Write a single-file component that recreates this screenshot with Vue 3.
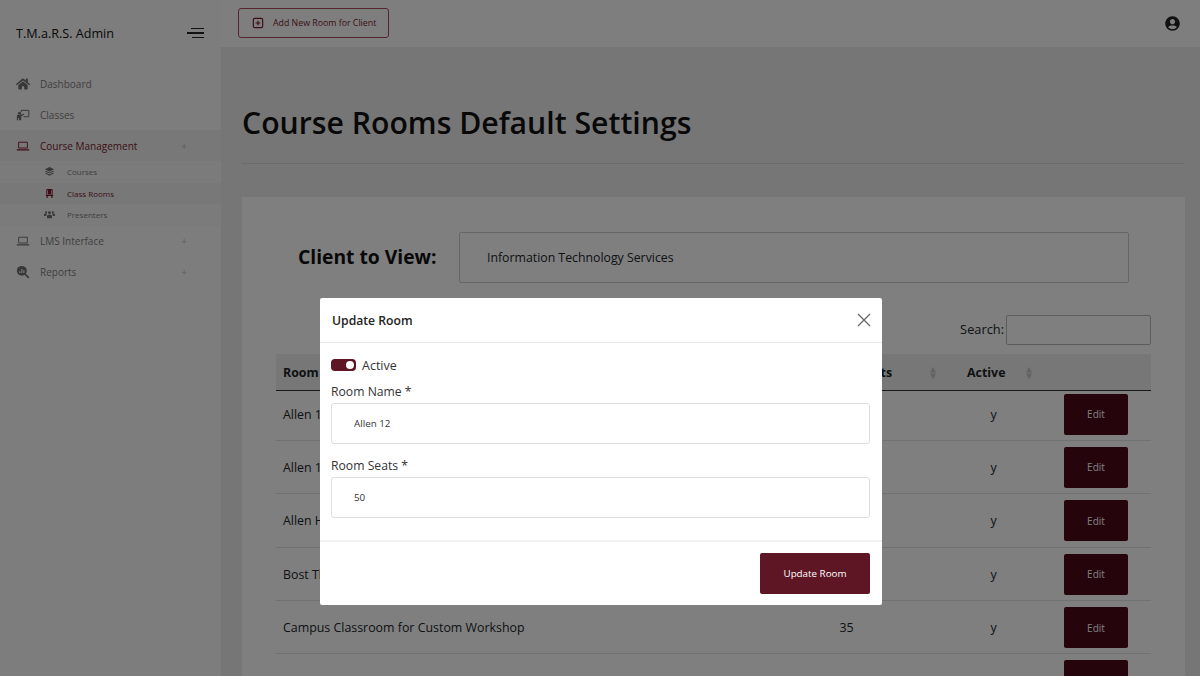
<template>
  <div class="app">
    <aside class="sidebar">
      <div class="brand">
        <span>T.M.a.R.S. Admin</span>
        <button class="burger" aria-label="Menu"><i></i><i></i><i></i></button>
      </div>
      <nav class="nav">
        <template v-for="item in nav" :key="item.label">
          <a class="nav-item" :class="{ open: item.children }">
            <svg class="nav-icon" :viewBox="icons[item.icon].box" v-html="icons[item.icon].body"></svg>
            <span class="nav-label">{{ item.label }}</span>
            <span v-if="item.plus" class="plus">+</span>
          </a>
          <div v-if="item.children" class="sub">
            <a v-for="c in item.children" :key="c.label" class="sub-item" :class="{ current: c.current }">
              <svg class="sub-icon" :viewBox="icons[c.icon].box" v-html="icons[c.icon].body"></svg>
              <span>{{ c.label }}</span>
            </a>
          </div>
        </template>
      </nav>
    </aside>

    <div class="page">
      <header class="topbar">
        <button class="add-btn">
          <svg viewBox="0 0 24 24" class="add-icon"><rect x="4" y="4" width="16" height="16" rx="2.5" fill="none" stroke="currentColor" stroke-width="2"/><path d="M12 8v8M8 12h8" stroke="currentColor" stroke-width="2"/></svg>
          Add New Room for Client
        </button>
        <svg class="user" viewBox="0 0 496 512"><path d="M248 8C111 8 0 119 0 256s111 248 248 248 248-111 248-248S385 8 248 8zm0 96c48.6 0 88 39.4 88 88s-39.4 88-88 88-88-39.4-88-88 39.4-88 88-88zm0 344c-58.7 0-111.3-26.6-146.5-68.2 18.8-35.4 55.6-59.8 98.5-59.8 2.4 0 4.8.4 7.1 1.1 13 4.2 26.6 6.9 40.9 6.9 14.3 0 28-2.7 40.9-6.9 2.3-.7 4.7-1.1 7.1-1.1 42.9 0 79.7 24.4 98.5 59.8C359.3 421.4 306.7 448 248 448z"/></svg>
      </header>

      <main class="main">
        <h1>Course Rooms Default Settings</h1>
        <hr />
        <section class="card">
          <div class="client">
            <label>Client to View:</label>
            <div class="client-box">Information Technology Services</div>
          </div>
          <div class="search">
            <label>Search:</label>
            <input type="text" />
          </div>
          <table class="table">
            <colgroup><col class="c1" /><col class="c2" /><col class="c3" /><col class="c4" /></colgroup>
            <thead>
              <tr>
                <th>Room Name</th>
                <th>Room Seats<svg class="sort s1" viewBox="0 0 8 16"><path d="M4 1l3.500 6.500h-7zM4 15L.5 8.500h7z"/></svg></th>
                <th>Active<svg class="sort s2" viewBox="0 0 8 16"><path d="M4 1l3.500 6.500h-7zM4 15L.5 8.500h7z"/></svg></th>
                <th></th>
              </tr>
            </thead>
            <tbody>
              <tr v-for="r in rooms" :key="r.name">
                <td>{{ r.name }}</td>
                <td class="seats">{{ r.seats }}</td>
                <td class="active">{{ r.active }}</td>
                <td><button class="edit">Edit</button></td>
              </tr>
            </tbody>
          </table>
        </section>
      </main>
    </div>

    <div class="backdrop">
      <div class="modal">
        <div class="modal-head">
          <h2>Update Room</h2>
          <button class="close" aria-label="Close">
            <svg viewBox="0 0 14 14"><path d="M1 1l12 12M13 1L1 13" stroke="currentColor" stroke-width="1.300" fill="none"/></svg>
          </button>
        </div>
        <form class="modal-body" @submit.prevent>
          <label class="switch-row">
            <input v-model="form.active" type="checkbox" class="switch" />
            Active
          </label>
          <label class="field-label">Room Name *</label>
          <input v-model="form.name" class="field" />
          <label class="field-label second">Room Seats *</label>
          <input v-model="form.seats" class="field" />
        </form>
        <div class="modal-foot">
          <button class="primary">Update Room</button>
        </div>
      </div>
    </div>
  </div>
</template>

<script setup>
import { reactive } from 'vue'

const form = reactive({ active: true, name: 'Allen 12', seats: '50' })

const laptop = {
  box: '0 0 24 24',
  body: '<path d="M4.500 5.500h15v10h-15z" fill="none" stroke="currentColor" stroke-width="1.600"/><path d="M1 17.500h22v.5a1.500 1.500 0 0 1-1.500 1.500h-19A1.500 1.500 0 0 1 1 18z" fill="currentColor"/>'
}

const icons = {
  home: {
    box: '0 0 576 512',
    body: '<path fill="currentColor" d="M280.37 148.26L96 300.11V464a16 16 0 0 0 16 16l112.06-.29a16 16 0 0 0 15.92-16V368a16 16 0 0 1 16-16h64a16 16 0 0 1 16 16v95.64a16 16 0 0 0 16 16.05L464 480a16 16 0 0 0 16-16V300L295.67 148.26a12.19 12.19 0 0 0-15.3 0zM571.6 251.47L488 182.56V44.05a12 12 0 0 0-12-12h-56a12 12 0 0 0-12 12v72.61L318.47 43a48 48 0 0 0-61 0L4.34 251.47a12 12 0 0 0-1.6 16.9l25.5 31A12 12 0 0 0 45.15 301l235.22-193.74a12.19 12.19 0 0 1 15.3 0L530.9 301a12 12 0 0 0 16.9-1.6l25.5-31a12 12 0 0 0-1.7-16.93z"/>'
  },
  teacher: {
    box: '0 0 24 24',
    body: '<circle cx="6" cy="9" r="2.600" fill="currentColor"/><path d="M1.500 13.500a2 2 0 0 1 2-1.800h5l4.500-2 .8 1.800-4.800 2.500V21H5v-4H3.500v4h-2z" fill="currentColor"/><path d="M9 7V4h13v11h-9" fill="none" stroke="currentColor" stroke-width="1.700"/>'
  },
  laptop,
  report: {
    box: '0 0 24 24',
    body: '<circle cx="10" cy="10" r="8.500" fill="currentColor"/><path d="M15.500 15.500l6.500 6.500" stroke="currentColor" stroke-width="3"/><path d="M6.500 10.500v3M10 7v6.500M13.500 9v4.500" stroke="#fff" stroke-width="1.800"/>'
  },
  layers: {
    box: '0 0 24 24',
    body: '<path fill="currentColor" d="M12 2l10 5-10 5L2 7zM4.500 10.200L12 14l7.500-3.800L22 11.500l-10 5-10-5zM4.500 14.700L12 18.500l7.500-3.800L22 16l-10 5-10-5z"/>'
  },
  chair: {
    box: '0 0 24 24',
    body: '<path fill="currentColor" d="M8 2h8a3 3 0 0 1 3 3v8h-2V5.500a1 1 0 0 0-1-1h-.5V13h-7V4.500H8a1 1 0 0 0-1 1V13H5V5a3 3 0 0 1 3-3zM4 14h16v3.500h-1.500V22H16v-4.500H8V22H5.500v-4.500H4z"/>'
  },
  users: {
    box: '0 0 24 24',
    body: '<g fill="currentColor"><circle cx="12" cy="8" r="3.200"/><circle cx="4.500" cy="7" r="2.300"/><circle cx="19.500" cy="7" r="2.300"/><path d="M6.500 20v-3.500c0-2.500 2-4 3.500-4h4c1.500 0 3.500 1.500 3.500 4V20zM0 15v-2c0-2 1-3 2.500-3h3c.5 0 1 .2 1.300.5A6 6 0 0 0 4.800 15zM24 15v-2c0-2-1-3-2.500-3h-3c-.5 0-1 .2-1.300.5a6 6 0 0 1 2 4.500z"/></g>'
  }
}

const nav = [
  { label: 'Dashboard', icon: 'home' },
  { label: 'Classes', icon: 'teacher' },
  {
    label: 'Course Management',
    icon: 'laptop',
    plus: true,
    children: [
      { label: 'Courses', icon: 'layers' },
      { label: 'Class Rooms', icon: 'chair', current: true },
      { label: 'Presenters', icon: 'users' }
    ]
  },
  { label: 'LMS Interface', icon: 'laptop', plus: true },
  { label: 'Reports', icon: 'report', plus: true }
]

const rooms = [
  { name: 'Allen 12', seats: 50, active: 'y' },
  { name: 'Allen 14', seats: 40, active: 'y' },
  { name: 'Allen Hall', seats: 30, active: 'y' },
  { name: 'Bost Theater', seats: 60, active: 'y' },
  { name: 'Campus Classroom for Custom Workshop', seats: 35, active: 'y' },
  { name: '', seats: '', active: '' }
]
</script>

<style>
html, body { margin: 0; height: 100%; overflow: hidden; }
</style>

<style scoped>
* { box-sizing: border-box; }
.app {
  position: relative;
  display: flex;
  height: 676px;
  overflow: hidden;
  font-family: "Open Sans", sans-serif;
  color: #212529;
  background: #ececec;
}
button { font-family: inherit; cursor: pointer; }

.sidebar { flex: 0 0 221px; background: #fafafa; }
.brand {
  display: flex;
  justify-content: space-between;
  align-items: center;
  height: 66px;
  padding: 0 17px 0 16px;
  font-size: 12.600px;
  font-weight: 500;
  color: #111;
}
.burger { display: flex; flex-direction: column; align-items: flex-end; gap: 3.200px; padding: 0; border: 0; background: none; }
.burger i { display: block; height: 1.200px; background: #222; }
.burger i:nth-child(1) { width: 13px; }
.burger i:nth-child(2) { width: 17px; }
.burger i:nth-child(3) { width: 12px; }

.nav { padding-top: 2px; }
.nav-item {
  display: flex;
  align-items: center;
  height: 31px;
  padding: 0 34px 0 16px;
  font-size: 10px;
  color: #808080;
}
.nav-icon { flex: none; width: 14px; height: 14px; margin-right: 10px; color: #707070; }
.nav-label { flex: 1; }
.plus { font-size: 10px; color: #bbb; }
.nav-item.open { background: #f1f1f1; color: #7a1a2e; }
.nav-item.open .nav-icon { color: #7a1a2e; }
.sub { background: #f6f6f6; }
.sub-item {
  display: flex;
  align-items: center;
  height: 21.500px;
  padding-left: 44px;
  font-size: 8px;
  color: #808080;
}
.sub-icon { flex: none; width: 11px; height: 11px; margin-right: 12px; color: #707070; }
.sub-item.current { background: #f1f1f1; color: #7a1a2e; }
.sub-item.current .sub-icon { color: #7a1a2e; }

.page { flex: 1; min-width: 0; display: flex; flex-direction: column; }
.topbar {
  flex: none;
  display: flex;
  justify-content: space-between;
  align-items: center;
  height: 47px;
  padding: 0 20px 1px 17px;
  background: #fcfcfc;
}
.add-btn {
  display: flex;
  align-items: center;
  width: 151px;
  height: 30px;
  padding: 0 0 0 12px;
  border: 1px solid #a84a5c;
  border-radius: 3px;
  background: none;
  color: #7a1a2e;
  font-size: 8.800px;
  white-space: nowrap;
}
.add-icon { width: 14px; height: 14px; margin-right: 8px; }
.user { width: 15px; height: 15px; fill: #222; }

.main { flex: 1; padding: 0 15px 0 21px; }
h1 { margin: 56px 0 20px; font-size: 30.200px; line-height: 40px; font-weight: 600; color: #111; }
hr { margin: 0 0 33px; border: 0; border-top: 1px solid #d8d8d8; }
.card { height: 600px; padding: 35px 34px; background: #fff; }
.client { display: flex; align-items: center; }
.client label { width: 183px; padding: 0 0 2px 22px; font-size: 19.300px; font-weight: 700; color: #111; }
.client-box {
  flex: 0 0 670px;
  height: 51px;
  line-height: 49px;
  padding-left: 27px;
  border: 1px solid #ccc;
  border-radius: 2px;
  font-size: 12.300px;
}
.search {
  display: flex;
  justify-content: flex-end;
  align-items: center;
  gap: 2px;
  margin-top: 32px;
  font-size: 12.800px;
}
.search label { padding-bottom: 2px; }
.search input { width: 145px; height: 30px; border: 1px solid #bbb; border-radius: 2px; background: transparent; }

.table { width: 875px; margin-top: 9px; border-collapse: collapse; table-layout: fixed; font-size: 12.400px; }
.c1 { width: 537px; }
.c2 { width: 147px; }
.c3 { width: 97px; }
.c4 { width: 94px; }
.table th {
  height: 36px;
  padding: 2px 7px 0;
  border-bottom: 1px solid #333;
  background: #efefef;
  text-align: left;
  font-weight: 700;
}
.table td { padding: 6px 7px 5.400px; border-bottom: 1px solid #e2e2e2; }
.table tbody tr:first-child td { padding-top: 3px; }
.seats { padding-right: 87px !important; text-align: center; }
.active { padding-right: 37px !important; text-align: center; }
.sort { width: 8px; height: 14px; vertical-align: -3px; fill: #c4c4c4; }
.s1 { margin-left: 37px; }
.s2 { margin-left: 20px; }
.edit {
  display: block;
  width: 64px;
  height: 41px;
  border: 0;
  border-radius: 2px;
  background: #4a0816;
  color: #fff;
  font-size: 10px;
}

.backdrop {
  position: absolute;
  inset: 0;
  display: flex;
  justify-content: center;
  padding: 298px 0 0 2px;
  background: rgba(0, 0, 0, .5);
}
.modal { width: 562px; height: 307px; border-radius: 2px; background: #fff; }
.modal-head {
  display: flex;
  justify-content: space-between;
  align-items: center;
  height: 45px;
  padding: 0 11px 0 12px;
  border-bottom: 1px solid #e9e9e9;
}
h2 { margin: 0; font-size: 12.200px; font-weight: 600; color: #222; }
.close { display: flex; padding: 0; border: 0; background: none; color: #666; }
.close svg { width: 14px; height: 14px; }
.modal-body { height: 199px; padding: 13px 12px 0 11px; border-bottom: 2px solid #f1f1f1; }
.switch-row { display: flex; align-items: center; gap: 6px; height: 18px; font-size: 12.500px; color: #333; }
.switch {
  appearance: none;
  position: relative;
  width: 25px;
  height: 12px;
  margin: 0;
  border-radius: 4px;
  background: #5e1625;
}
.switch::after {
  content: "";
  position: absolute;
  top: 2px;
  right: 2px;
  width: 8px;
  height: 8px;
  border-radius: 50%;
  background: #fff;
}
.field-label { display: block; margin-top: 7px; font-size: 12.200px; line-height: 22px; color: #333; }
.field-label.second { margin-top: 11px; }
.field {
  display: block;
  width: 100%;
  height: 41px;
  padding: 0 0 0 22px;
  border: 1px solid #ddd;
  border-radius: 3px;
  outline: none;
  font-family: inherit;
  font-size: 9.800px;
  color: #333;
}
.modal-foot { display: flex; justify-content: flex-end; padding: 11px 12px; }
.primary {
  width: 110px;
  height: 41px;
  border: 0;
  border-radius: 2px;
  background: #5e1625;
  color: #fff;
  font-size: 9.800px;
}
</style>
